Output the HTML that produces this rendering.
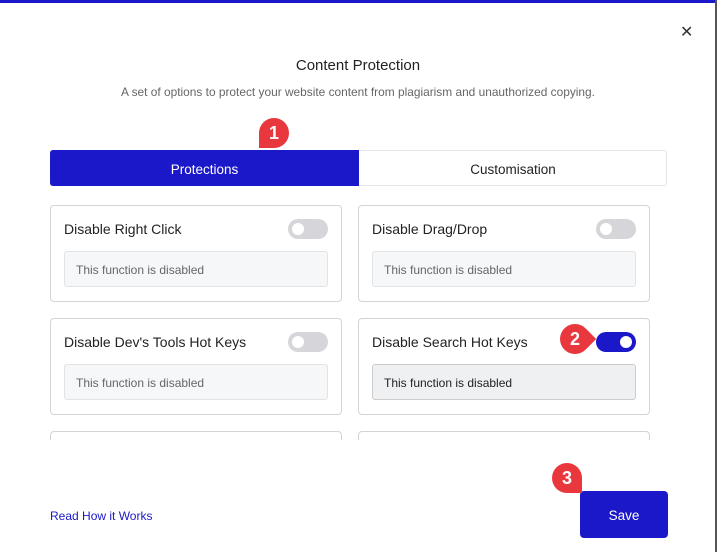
<!DOCTYPE html><html><head><style>
body{margin:0;width:719px;height:552px;overflow:hidden;background:#fff;font-family:"Liberation Sans",sans-serif;position:relative}
.a{position:absolute}
.top{left:0;top:0;width:716px;height:3px;background:#1a18c8}
.edge{left:715px;top:0;width:2px;height:552px;background:#555}
.card{position:absolute;width:290px;height:95px;border:1px solid #d4d4d8;border-radius:4px;background:#fff}
.card .t{position:absolute;left:13px;top:15px;font-size:14px;color:#222}
.card .b{position:absolute;left:13px;top:45px;width:264px;height:36px;border:1px solid #e2e3e5;border-radius:3px;background:#f6f7f8;font-size:12px;color:#666;line-height:37px;box-sizing:border-box;padding-left:11px}
.tg{position:absolute;right:13px;top:13px;width:40px;height:20px;border-radius:10px;background:#d6d6da}
.tg:after{content:"";position:absolute;left:4px;top:4px;width:12px;height:12px;border-radius:50%;background:#fff}
.tg.on{background:#1a18c8}.tg.on:after{left:24px}
.pin{position:absolute;width:30px;height:30px;border-radius:50%;background:#e8383d;color:#fff;font-weight:bold;font-size:18px;text-align:center;line-height:30px}
</style></head><body>
<div class="a top"></div><div class="a edge"></div>
<div class="a" style="left:680px;top:22px;font-size:16px;color:#333">✕</div>
<div class="a" style="left:0;width:716px;top:57px;text-align:center;font-size:15px;color:#222">Content Protection</div>
<div class="a" style="left:0;width:716px;top:85px;text-align:center;font-size:11.9px;color:#666">A set of options to protect your website content from plagiarism and unauthorized copying.</div>
<div class="a" style="left:50px;top:150px;width:617px;height:36px;border:1px solid #e3e3e6;box-sizing:border-box;border-radius:3px"></div>
<div class="a" style="left:50px;top:150px;width:309px;height:36px;background:#1a18c8;color:#fff;font-size:13.5px;text-align:center;line-height:39px;border-radius:3px 0 0 3px">Protections</div>
<div class="a" style="left:359px;top:150px;width:308px;height:36px;color:#222;font-size:13.5px;text-align:center;line-height:39px">Customisation</div>
<div class="card" style="left:50px;top:205px"><div class="t">Disable Right Click</div><div class="tg"></div><div class="b">This function is disabled</div></div>
<div class="card" style="left:358px;top:205px"><div class="t">Disable Drag/Drop</div><div class="tg"></div><div class="b">This function is disabled</div></div>
<div class="card" style="left:50px;top:318px"><div class="t">Disable Dev's Tools Hot Keys</div><div class="tg"></div><div class="b">This function is disabled</div></div>
<div class="card" style="left:358px;top:318px"><div class="t">Disable Search Hot Keys</div><div class="tg on"></div><div class="b" style="color:#222;background:#eef0f2;border-color:#ccc">This function is disabled</div></div>
<div class="a" style="left:50px;top:431px;width:292px;height:9px;border:1px solid #d4d4d8;border-bottom:none;border-radius:4px 4px 0 0;box-sizing:border-box"></div>
<div class="a" style="left:358px;top:431px;width:292px;height:9px;border:1px solid #d4d4d8;border-bottom:none;border-radius:4px 4px 0 0;box-sizing:border-box"></div>
<div class="a" style="left:50px;top:509px;font-size:12px;color:#1a18c8">Read How it Works</div>
<div class="a" style="left:580px;top:491px;width:88px;height:47px;background:#1a18c8;border-radius:4px;color:#fff;font-size:13.5px;text-align:center;line-height:50px">Save</div>
<div class="pin" style="left:259px;top:118px;border-bottom-left-radius:0">1</div>
<div class="pin" style="left:560px;top:324px;border-bottom-right-radius:0;transform:rotate(-45deg)"><span style="display:inline-block;transform:rotate(45deg)">2</span></div>
<div class="pin" style="left:552px;top:463px;border-bottom-right-radius:0">3</div>
</body></html>
